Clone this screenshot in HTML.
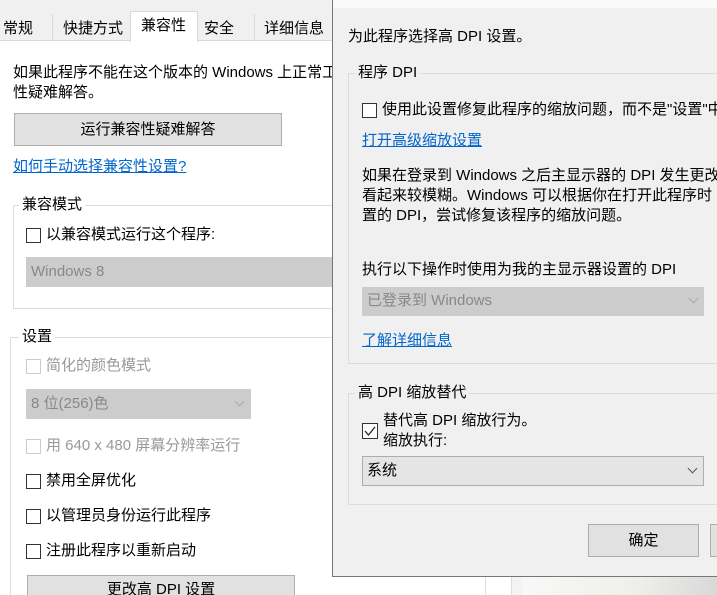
<!DOCTYPE html>
<html><head><meta charset="utf-8"><style>
*{margin:0;padding:0;box-sizing:border-box}
html,body{width:717px;height:595px;overflow:hidden}
body{position:relative;background:#fff;font-family:"Liberation Sans","Noto Sans CJK SC",sans-serif;font-size:15px;color:#000}
.a{position:absolute;white-space:nowrap;line-height:18px}
.cb{position:absolute;width:15px;height:15px;border:1px solid #333;background:#fff}
.cb.d{border-color:#ccc}
.btn{position:absolute;background:#e1e1e1;border:1px solid #adadad;text-align:center}
.lnk{color:#0066cc;text-decoration:underline}
.grp{position:absolute;border:1px solid #dcdcdc}
.lab{position:absolute;padding:0 3px;line-height:18px}
.chev{position:absolute;width:7px;height:7px;border-right:1px solid #888;border-bottom:1px solid #888;transform:rotate(45deg)}
</style></head><body>
<div style="position:absolute;left:0;top:0;width:333px;height:41px;background:#f0f0f0;border-bottom:1px solid #d9d9d9"></div>
<div style="position:absolute;left:130px;top:11px;width:68px;height:31px;background:#fff;border:1px solid #d9d9d9;border-bottom:none"></div>
<div style="position:absolute;left:52px;top:14px;width:1px;height:27px;background:#d9d9d9"></div>
<div style="position:absolute;left:254px;top:14px;width:1px;height:27px;background:#d9d9d9"></div>
<div class="a" style="left:3px;top:20px">常规</div>
<div class="a" style="left:63px;top:20px">快捷方式</div>
<div class="a" style="left:141px;top:17px">兼容性</div>
<div class="a" style="left:204px;top:20px">安全</div>
<div class="a" style="left:264px;top:20px">详细信息</div>
<div class="a" style="left:13px;top:64px">如果此程序不能在这个版本的 Windows 上正常工</div>
<div class="a" style="left:13px;top:84px">性疑难解答。</div>
<div class="btn" style="left:14px;top:113px;width:268px;height:33px;line-height:31px">运行兼容性疑难解答</div>
<div class="a lnk" style="left:13px;top:158px">如何手动选择兼容性设置?</div>
<div class="grp" style="left:13px;top:205px;width:330px;height:104px"></div>
<div class="lab" style="left:19px;top:196px;background:#fff">兼容模式</div>
<div class="cb" style="left:26px;top:228px"></div>
<div class="a" style="left:46px;top:226px">以兼容模式运行这个程序:</div>
<div style="position:absolute;left:26px;top:257px;width:310px;height:30px;background:#cccccc"></div>
<div class="a" style="left:31px;top:263px;color:#888">Windows 8</div>
<div class="grp" style="left:10px;top:337px;width:330px;height:270px;border-right:none"></div>
<div class="lab" style="left:19px;top:328px;background:#fff">设置</div>
<div class="cb d" style="left:26px;top:359px"></div>
<div class="a" style="left:46px;top:357px;color:#999">简化的颜色模式</div>
<div style="position:absolute;left:26px;top:389px;width:225px;height:30px;background:#cccccc"></div>
<div class="a" style="left:31px;top:395px;color:#888">8 位(256)色</div>
<div class="chev" style="left:236px;top:398px;border-color:#aaa"></div>
<div class="cb d" style="left:26px;top:439px"></div>
<div class="a" style="left:46px;top:437px;color:#999">用 640 x 480 屏幕分辨率运行</div>
<div class="cb" style="left:26px;top:474px"></div>
<div class="a" style="left:46px;top:472px">禁用全屏优化</div>
<div class="cb" style="left:26px;top:509px"></div>
<div class="a" style="left:46px;top:507px">以管理员身份运行此程序</div>
<div class="cb" style="left:26px;top:544px"></div>
<div class="a" style="left:46px;top:542px">注册此程序以重新启动</div>
<div class="btn" style="left:27px;top:575px;width:268px;height:30px;line-height:28px">更改高 DPI 设置</div>
<div style="position:absolute;left:485px;top:577px;width:1px;height:20px;background:#ddd"></div>
<div style="position:absolute;left:511px;top:577px;width:11px;height:20px;background:#f3f3f3;border-left:1px solid #ddd"></div>
<div style="position:absolute;left:522px;top:577px;width:195px;height:20px;background:linear-gradient(100deg,#f8f8f8,#eeeeea 60%,#d8d8d8)"></div>
<div style="position:absolute;left:332px;top:0;width:390px;height:577px;background:#f0f0f0;border-left:1px solid #777;border-bottom:1px solid #777"></div>
<div style="position:absolute;left:333px;top:0;width:390px;height:8px;background:#fafafa"></div>
<div class="a" style="left:348px;top:28px">为此程序选择高 DPI 设置。</div>
<div class="grp" style="left:348px;top:73px;width:380px;height:291px"></div>
<div class="lab" style="left:355px;top:64px;background:#f0f0f0">程序 DPI</div>
<div class="cb" style="left:362px;top:103px"></div>
<div class="a" style="left:382px;top:101px">使用此设置修复此程序的缩放问题，而不是"设置"中</div>
<div class="a lnk" style="left:362px;top:132px">打开高级缩放设置</div>
<div class="a" style="left:362px;top:166px;line-height:20px">如果在登录到 Windows 之后主显示器的 DPI 发生更改<br>看起来较模糊。Windows 可以根据你在打开此程序时<br>置的 DPI，尝试修复该程序的缩放问题。</div>
<div class="a" style="left:362px;top:261px">执行以下操作时使用为我的主显示器设置的 DPI</div>
<div style="position:absolute;left:362px;top:287px;width:342px;height:29px;background:#cccccc"></div>
<div class="a" style="left:367px;top:292px;color:#888">已登录到 Windows</div>
<div class="chev" style="left:690px;top:295px;border-color:#aaa"></div>
<div class="a lnk" style="left:362px;top:332px">了解详细信息</div>
<div class="grp" style="left:348px;top:393px;width:380px;height:112px"></div>
<div class="lab" style="left:355px;top:384px;background:#f0f0f0">高 DPI 缩放替代</div>
<div class="cb" style="left:362px;top:423px;width:16px;height:16px"><svg width="14" height="14" style="position:absolute;left:0;top:0"><path d="M2 7 L5.5 11 L12 3" fill="none" stroke="#222" stroke-width="1.3"/></svg></div>
<div class="a" style="left:383px;top:412px">替代高 DPI 缩放行为。</div>
<div class="a" style="left:383px;top:432px">缩放执行:</div>
<div style="position:absolute;left:362px;top:456px;width:342px;height:30px;background:#e5e5e5;border:1px solid #adadad"></div>
<div class="a" style="left:367px;top:462px">系统</div>
<div class="chev" style="left:689px;top:465px;border-color:#555"></div>
<div class="btn" style="left:588px;top:524px;width:111px;height:33px;line-height:31px">确定</div>
<div class="btn" style="left:710px;top:524px;width:20px;height:33px"></div>
</body></html>
